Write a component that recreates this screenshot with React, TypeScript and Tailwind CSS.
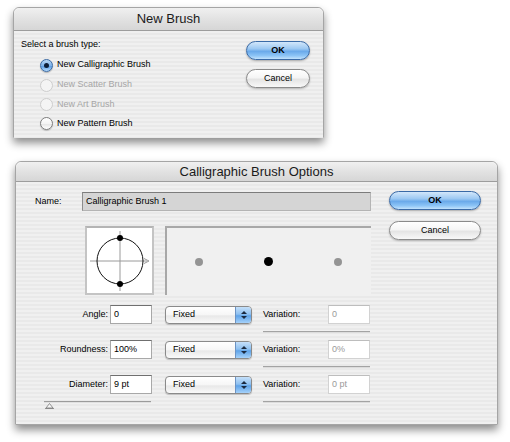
import React from "react";

const font = "font-['Liberation_Sans',Arial,sans-serif]";

function Radio({ state }: { state: "on" | "off" | "dis" }) {
  if (state === "on")
    return (
      <div className="flex h-[13px] w-[13px] items-center justify-center rounded-full border border-[#3b6aa3] bg-[linear-gradient(to_bottom,#bcd9f5_0%,#7fb3ea_50%,#5a9de4_55%,#b4dafc_100%)] shadow-[0_1px_1px_rgba(0,0,0,0.25)]">
        <div className="h-[5px] w-[5px] rounded-full bg-[#0d1d36]" />
      </div>
    );
  if (state === "off")
    return (
      <div className="h-[13px] w-[13px] rounded-full border border-[#7d7d7d] bg-[linear-gradient(to_bottom,#ffffff_0%,#f4f4f4_50%,#e6e6e6_55%,#ffffff_100%)] shadow-[0_1px_1px_rgba(0,0,0,0.2)]" />
    );
  return <div className="h-[13px] w-[13px] rounded-full border border-[#cdcdcd] bg-[#f4f4f4]" />;
}

function OkButton({ w }: { w: string }) {
  return (
    <div
      className={`${w} flex h-[19px] items-center justify-center rounded-full border border-[#3a6aa6] bg-[linear-gradient(to_bottom,#d2e7fb_0%,#9cc8f2_40%,#6aa9ea_55%,#8cc4f6_80%,#c2e2fd_100%)] text-[9px] font-bold text-black shadow-[0_1px_2px_rgba(0,0,0,0.3)]`}
    >
      OK
    </div>
  );
}

function CancelButton({ w }: { w: string }) {
  return (
    <div
      className={`${w} flex h-[19px] items-center justify-center rounded-full border border-[#8a8a8a] bg-[linear-gradient(to_bottom,#ffffff_0%,#f5f5f5_45%,#e4e4e4_55%,#f8f8f8_100%)] text-[9px] text-black shadow-[0_1px_2px_rgba(0,0,0,0.25)]`}
    >
      Cancel
    </div>
  );
}

function TitleBar({ title, h }: { title: string; h: string }) {
  return (
    <div
      className={`${h} flex items-center justify-center rounded-t-[6px] border-b border-[#9d9d9d] bg-[linear-gradient(to_bottom,#f0f0f0_0%,#e2e2e2_50%,#d6d6d6_100%)] text-[13px] text-[#1a1a1a]`}
    >
      {title}
    </div>
  );
}

function Field({ value, dim }: { value: string; dim?: boolean }) {
  return (
    <div
      className={`flex h-[19px] w-[42px] items-center border ${
        dim
          ? "border-[#d2d2d2] border-t-[#bdbdbd] text-[#9a9a9a]"
          : "border-[#a8a8a8] border-t-[#6f6f6f] text-black"
      } bg-white pl-[3px] text-[9px]`}
    >
      {value}
    </div>
  );
}

function Select() {
  return (
    <div className="flex h-[18px] w-[87px] items-stretch overflow-hidden rounded-[4px] border border-[#8a8a8a] bg-[linear-gradient(to_bottom,#ffffff_0%,#f6f6f6_50%,#e8e8e8_55%,#fafafa_100%)] shadow-[0_1px_1px_rgba(0,0,0,0.2)]">
      <div className="flex flex-1 items-center pl-[7px] text-[9px] text-black">Fixed</div>
      <div className="flex w-[16px] flex-col items-center justify-center gap-[2px] border-l border-[#6b93c4] bg-[linear-gradient(to_bottom,#c5e0fa_0%,#8ec0f0_45%,#5fa3e8_55%,#a5d2fb_100%)]">
        <svg width="6" height="3" viewBox="0 0 6 3">
          <polygon points="0,3 6,3 3,0" fill="#1b2a40" />
        </svg>
        <svg width="6" height="3" viewBox="0 0 6 3">
          <polygon points="0,0 6,0 3,3" fill="#1b2a40" />
        </svg>
      </div>
    </div>
  );
}

function ParamRow({
  label,
  value,
  varValue,
  slider,
}: {
  label: string;
  value: string;
  varValue: string;
  slider?: boolean;
}) {
  return (
    <div className="flex flex-col">
      <div className="flex h-[19px] items-center">
        <div className="w-[94px] pr-[2px] text-right text-[9px] text-black">{label}</div>
        <Field value={value} />
        <div className="ml-[13px]">
          <Select />
        </div>
        <div className="ml-[11px] w-[65px] text-[9px] text-black">Variation:</div>
        <Field value={varValue} dim />
      </div>
      <div className="relative flex h-[16px] items-center">
        {slider ? (
          <div className="relative ml-[28px] w-[107px]">
            <div className="h-[2px] border-t border-[#9b9b9b] bg-[#e0e0e0]" />
            <svg className="absolute left-[1px] top-[2px]" width="9" height="6" viewBox="0 0 9 6">
              <polygon points="4.5,0.5 8,5 1,5" fill="#f4f4f4" stroke="#7a7a7a" strokeWidth="0.8" />
              <line x1="0" y1="5.5" x2="9" y2="5.5" stroke="#7a7a7a" strokeWidth="0.8" />
            </svg>
          </div>
        ) : null}
        <div className={`${slider ? "ml-[112px]" : "ml-[247px]"} h-[2px] w-[107px] border-t border-[#a3a3a3] bg-[#dcdcdc]`} />
      </div>
    </div>
  );
}

const stripes =
  "bg-[repeating-linear-gradient(to_bottom,#f0f0f0_0px,#f0f0f0_2px,#e9e9e9_2px,#e9e9e9_4px)]";

export default function App() {
  return (
    <div className={`${font} h-[442px] w-[510px] overflow-hidden bg-white`}>
      {/* New Brush dialog */}
      <div className="ml-[13px] mt-[7px] h-[131px] w-[311px] rounded-t-[6px] border border-[#a5a5a5] shadow-[0_5px_9px_rgba(0,0,0,0.45)]">
        <TitleBar title="New Brush" h="h-[23px]" />
        <div className={`${stripes} flex h-[107px]`}>
          <div className="flex flex-col pl-[7px] pt-[7px]">
            <div className="h-[12px] text-[9px] leading-[12px] text-black">Select a brush type:</div>
            <div className="mt-[5px] flex flex-col pl-[19px]">
              <div className="flex h-[20px] items-center gap-[4px] text-[9px] text-black">
                <Radio state="on" />
                New Calligraphic Brush
              </div>
              <div className="flex h-[20px] items-center gap-[4px] text-[9px] text-[#a6a6a6]">
                <Radio state="dis" />
                New Scatter Brush
              </div>
              <div className="flex h-[19px] items-center gap-[4px] text-[9px] text-[#a6a6a6]">
                <Radio state="dis" />
                New Art Brush
              </div>
              <div className="flex h-[19px] items-center gap-[4px] text-[9px] text-black">
                <Radio state="off" />
                New Pattern Brush
              </div>
            </div>
          </div>
          <div className="ml-auto mr-[13px] flex flex-col gap-[9px] pt-[10px]">
            <OkButton w="w-[64px]" />
            <CancelButton w="w-[64px]" />
          </div>
        </div>
      </div>

      {/* Calligraphic Brush Options dialog */}
      <div className="ml-[15px] mt-[23px] h-[264px] w-[483px] rounded-t-[6px] border border-[#a5a5a5] shadow-[0_5px_9px_rgba(0,0,0,0.45)]">
        <TitleBar title="Calligraphic Brush Options" h="h-[20px]" />
        <div className={`${stripes} flex h-[242px] pt-[9px]`}>
          <div className="flex w-[355px] flex-col">
            <div className="mt-[1px] flex h-[19px] items-center pl-[19px]">
              <div className="w-[47px] text-[9px] text-black">Name:</div>
              <div className="flex h-[19px] w-[289px] items-center border border-[#b4b4b4] border-t-[#7c7c7c] border-l-[#8c8c8c] bg-[#d5d5d5] pl-[3px] text-[9px] text-black">
                Calligraphic Brush 1
              </div>
            </div>
            <div className="mt-[15px] flex">
              <div className="ml-[69px] h-[69px] w-[69px] border-2 border-[#c4c4c4] border-t-[#b4b4b4] bg-white">
                <svg width="65" height="65" viewBox="0 0 65 65">
                  <line x1="3" y1="33" x2="60" y2="33" stroke="#9a9a9a" strokeWidth="1" />
                  <polyline points="57,30.5 62,33 57,35.5" fill="none" stroke="#9a9a9a" strokeWidth="1" />
                  <line x1="33" y1="3" x2="33" y2="63" stroke="#9a9a9a" strokeWidth="1" />
                  <circle cx="33" cy="33" r="23" fill="none" stroke="#111" strokeWidth="1" />
                  <circle cx="33" cy="10" r="3" fill="#000" />
                  <circle cx="33" cy="56" r="3" fill="#000" />
                </svg>
              </div>
              <div className="relative ml-[11px] h-[69px] w-[206px] border-l-2 border-t-2 border-[#a8a8a8] bg-[#f0f0f0]">
                <div className="flex h-full items-center">
                  <div className="ml-[28px] h-[8px] w-[8px] rounded-full bg-[#949494]" />
                  <div className="ml-[61px] h-[9px] w-[9px] rounded-full bg-black" />
                  <div className="ml-[61px] h-[8px] w-[8px] rounded-full bg-[#949494]" />
                </div>
              </div>
            </div>
            <div className="mt-[10px] flex flex-col">
              <ParamRow label="Angle:" value="0" varValue="0" />
              <ParamRow label="Roundness:" value="100%" varValue="0%" />
              <ParamRow label="Diameter:" value="9 pt" varValue="0 pt" slider />
            </div>
          </div>
          <div className="ml-[18px] flex flex-col gap-[11px]">
            <OkButton w="w-[92px]" />
            <CancelButton w="w-[92px]" />
          </div>
        </div>
      </div>
    </div>
  );
}
